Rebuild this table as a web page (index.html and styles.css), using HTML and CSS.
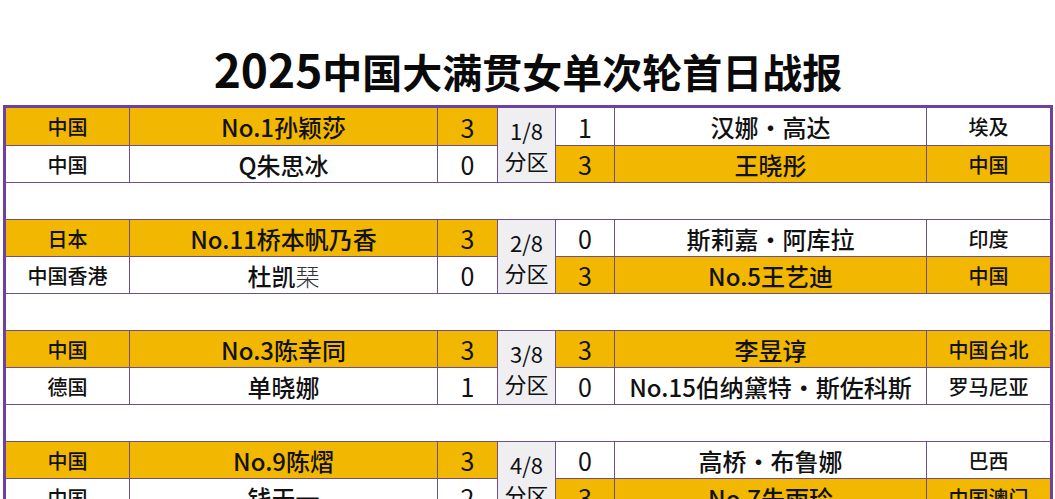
FILE: index.html
```html
<!DOCTYPE html>
<html lang="zh-CN">
<head>
<meta charset="utf-8">
<title>2025中国大满贯女单次轮首日战报</title>
<link rel="stylesheet" href="styles.css">
</head>
<body>
<div class="page">
  <h1 class="title"><span class="title-num">2025</span>中国大满贯女单次轮首日战报</h1>
  <div class="board">
    <!-- group 1 -->
    <div class="cell country win">中国</div>
    <div class="cell name win">No.1孙颖莎</div>
    <div class="cell score win">3</div>
    <div class="cell zone"><span>1/8</span><span>分区</span></div>
    <div class="cell score">1</div>
    <div class="cell name">汉娜·高达</div>
    <div class="cell country">埃及</div>

    <div class="cell country">中国</div>
    <div class="cell name">Q朱思冰</div>
    <div class="cell score">0</div>
    <div class="cell score win">3</div>
    <div class="cell name win">王晓彤</div>
    <div class="cell country win">中国</div>
    <div class="spacer"></div>

    <!-- group 2 -->
    <div class="cell country win">日本</div>
    <div class="cell name win">No.11桥本帆乃香</div>
    <div class="cell score win">3</div>
    <div class="cell zone"><span>2/8</span><span>分区</span></div>
    <div class="cell score">0</div>
    <div class="cell name">斯莉嘉·阿库拉</div>
    <div class="cell country">印度</div>

    <div class="cell country">中国香港</div>
    <div class="cell name">杜凯<span class="fallback">琹</span></div>
    <div class="cell score">0</div>
    <div class="cell score win">3</div>
    <div class="cell name win">No.5王艺迪</div>
    <div class="cell country win">中国</div>
    <div class="spacer"></div>

    <!-- group 3 -->
    <div class="cell country win">中国</div>
    <div class="cell name win">No.3陈幸同</div>
    <div class="cell score win">3</div>
    <div class="cell zone"><span>3/8</span><span>分区</span></div>
    <div class="cell score win">3</div>
    <div class="cell name win">李昱谆</div>
    <div class="cell country win">中国台北</div>

    <div class="cell country">德国</div>
    <div class="cell name">单晓娜</div>
    <div class="cell score">1</div>
    <div class="cell score">0</div>
    <div class="cell name">No.15伯纳黛特·斯佐科斯</div>
    <div class="cell country">罗马尼亚</div>
    <div class="spacer"></div>

    <!-- group 4 -->
    <div class="cell country win">中国</div>
    <div class="cell name win">No.9陈熠</div>
    <div class="cell score win">3</div>
    <div class="cell zone"><span>4/8</span><span>分区</span></div>
    <div class="cell score">0</div>
    <div class="cell name">高桥·布鲁娜</div>
    <div class="cell country">巴西</div>

    <div class="cell country">中国</div>
    <div class="cell name">钱天一</div>
    <div class="cell score">2</div>
    <div class="cell score win">3</div>
    <div class="cell name win">No.7朱雨玲</div>
    <div class="cell country win">中国澳门</div>
  </div>
</div>
</body>
</html>
```
FILE: styles.css
```css
html, body {
  margin: 0;
  padding: 0;
  background: #ffffff;
  overflow: hidden;
}

body {
  font-family: "Noto Sans CJK SC", "Noto Sans", sans-serif;
  color: #111111;
}

.page {
  width: 1055px;
  padding: 0 2px 0 3px;
  box-sizing: border-box;
}

.title {
  margin: 0;
  height: 105px;
  box-sizing: border-box;
  padding-top: 44px;
  font-size: 40px;
  line-height: 48px;
  font-weight: 600;
  text-align: center;
  color: #0a0a0a;
}

.title-num {
  font-size: 46px;
}

.board {
  display: grid;
  grid-template-columns: 123px 307px 59px 57px 58px 311px 123px;
  grid-template-rows: 37px;
  grid-auto-rows: 36px;
  gap: 1px;
  background: #6f4f86;
  border: 3px solid #7040a0;
  border-bottom: none;
}

.cell {
  display: flex;
  align-items: center;
  justify-content: center;
  background: #ffffff;
  white-space: nowrap;
}

.cell.win {
  background: #f2b700;
}

.country {
  font-size: 20px;
  font-weight: 500;
}

.name {
  font-size: 24px;
  font-weight: 500;
}

.score {
  font-size: 25px;
  font-weight: 400;
}

.zone {
  grid-row: span 2;
  flex-direction: column;
  background: #efeff2;
  font-size: 22px;
  line-height: 30px;
  font-weight: 400;
}

.spacer {
  grid-column: 1 / -1;
  background: #ffffff;
}

.fallback {
  font-weight: 300;
  color: #333333;
}
```
